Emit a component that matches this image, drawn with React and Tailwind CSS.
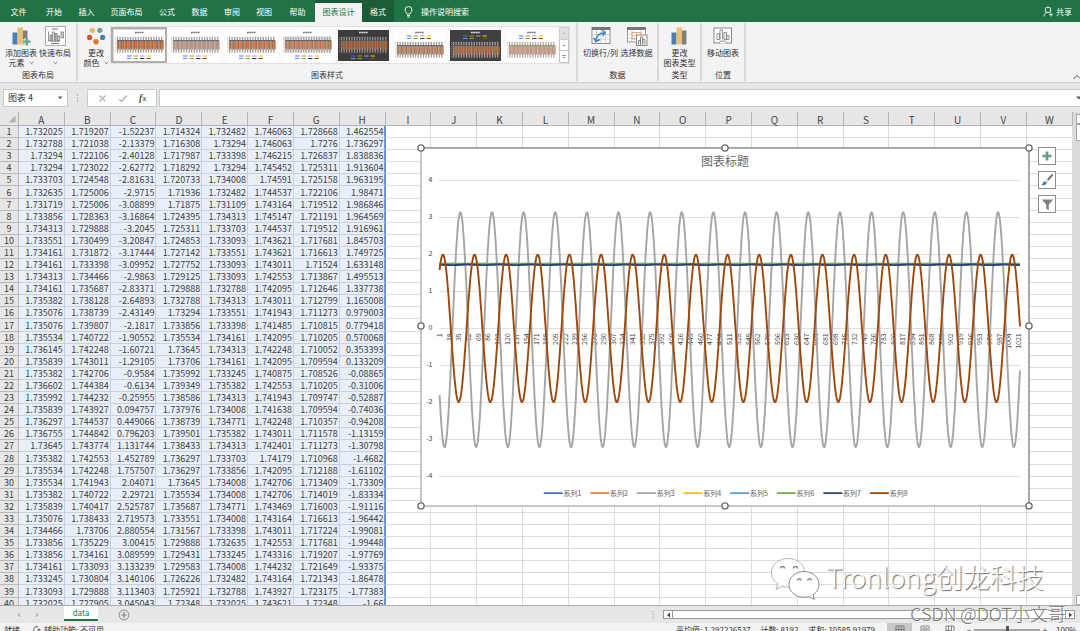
import React from "react";

const FONT = "font-['Noto_Sans_CJK_SC','Liberation_Sans',sans-serif]";

const COLUMNS = "ABCDEFGHIJKLMNOPQRSTUVW".split("");
const EMPTY_COLUMNS = COLUMNS.slice(8);

const ROWS = `1.732025 1.719207 -1.52237 1.714324 1.732482 1.746063 1.728668 1.462554
1.732788 1.721038 -2.13379 1.716308 1.73294 1.746063 1.7276 1.736297
1.73294 1.722106 -2.40128 1.717987 1.733398 1.746215 1.726837 1.838836
1.73294 1.723022 -2.62772 1.718292 1.73294 1.745452 1.725311 1.913604
1.733703 1.724548 -2.81631 1.720733 1.734008 1.74591 1.725158 1.963195
1.732635 1.725006 -2.9715 1.71936 1.732482 1.744537 1.722106 1.98471
1.731719 1.725006 -3.08899 1.71875 1.731109 1.743164 1.719512 1.986846
1.733856 1.728363 -3.16864 1.724395 1.734313 1.745147 1.721191 1.964569
1.734313 1.729888 -3.2045 1.725311 1.733703 1.744537 1.719512 1.916961
1.733551 1.730499 -3.20847 1.724853 1.733093 1.743621 1.717681 1.845703
1.734161 1.731872 -3.17444 1.727142 1.733551 1.743621 1.716613 1.749725
1.734161 1.733398 -3.09952 1.727752 1.733093 1.743011 1.71524 1.633148
1.734313 1.734466 -2.9863 1.729125 1.733093 1.742553 1.713867 1.495513
1.734161 1.735687 -2.83371 1.729888 1.732788 1.742095 1.712646 1.337738
1.735382 1.738128 -2.64893 1.732788 1.734313 1.743011 1.712799 1.165008
1.735076 1.738739 -2.43149 1.73294 1.733551 1.741943 1.711273 0.979003
1.735076 1.739807 -2.1817 1.733856 1.733398 1.741485 1.710815 0.779418
1.735534 1.740722 -1.90552 1.735534 1.734161 1.742095 1.710205 0.570068
1.736145 1.742248 -1.60721 1.73645 1.734313 1.742248 1.710052 0.353393
1.735839 1.743011 -1.29105 1.73706 1.734161 1.742095 1.709594 0.133209
1.735382 1.742706 -0.9584 1.735992 1.733245 1.740875 1.708526 -0.08865
1.736602 1.744384 -0.6134 1.739349 1.735382 1.742553 1.710205 -0.31006
1.735992 1.744232 -0.25955 1.738586 1.734313 1.741943 1.709747 -0.52887
1.735839 1.743927 0.094757 1.737976 1.734008 1.741638 1.709594 -0.74036
1.736297 1.744537 0.449066 1.738739 1.734771 1.742248 1.710357 -0.94208
1.736755 1.744842 0.796203 1.739501 1.735382 1.743011 1.711578 -1.13159
1.73645 1.743774 1.131744 1.738433 1.734313 1.742401 1.711273 -1.30798
1.735382 1.742553 1.452789 1.736297 1.733703 1.74179 1.710968 -1.4682
1.735534 1.742248 1.757507 1.736297 1.733856 1.742095 1.712188 -1.61102
1.735534 1.741943 2.04071 1.73645 1.734008 1.742706 1.713409 -1.73309
1.735382 1.740722 2.29721 1.735534 1.734008 1.742706 1.714019 -1.83334
1.735839 1.740417 2.525787 1.735687 1.734771 1.743469 1.716003 -1.91116
1.735076 1.738433 2.719573 1.733551 1.734008 1.743164 1.716613 -1.96442
1.734466 1.73706 2.880554 1.731567 1.733398 1.743011 1.717224 -1.99081
1.733856 1.735229 3.00415 1.729888 1.732635 1.742553 1.717681 -1.99448
1.733856 1.734161 3.089599 1.729431 1.733245 1.743316 1.719207 -1.97769
1.734161 1.733093 3.133239 1.729583 1.734008 1.744232 1.721649 -1.93375
1.733245 1.730804 3.140106 1.726226 1.732482 1.743164 1.721343 -1.86478
1.733093 1.729888 3.113403 1.725921 1.732788 1.743927 1.723175 -1.77383
1.732025 1.727905 3.045043 1.72348 1.732025 1.743621 1.72348 -1.66`
  .split("\n")
  .map((line) => line.split(" "));

/* ---------- chart ---------- */

const POINTS = 1024;
const px = (i) => 439.3 + (i - 0.5) * (581 / POINTS);
const py = (v) => 328.4 - v * 37;

function linePath(valueAt, step = 1) {
  const parts = [];
  for (let i = 1; i <= POINTS; i += step) {
    parts.push(`${parts.length ? "L" : "M"}${px(i).toFixed(1)} ${py(valueAt(i)).toFixed(1)}`);
  }
  return parts.join("");
}

const wave = (i, shift) => Math.cos((2 * Math.PI * (i - shift)) / 55.75);

const SERIES = [
  { name: "系列1", color: "#4472c4", at: () => 1.735 },
  { name: "系列2", color: "#ed7d31", at: (i) => 1.732 + 0.013 * wave(i, 26) },
  { name: "系列3", color: "#a5a5a5", at: (i) => -3.175 * wave(i, 9.7) - 0.035 },
  { name: "系列4", color: "#ffc000", at: (i) => 1.727 + 0.013 * wave(i, 26) },
  { name: "系列5", color: "#5b9bd5", at: () => 1.734 },
  { name: "系列6", color: "#70ad47", at: () => 1.748 },
  { name: "系列7", color: "#264478", at: (i) => 1.72 - 0.01 * wave(i, 23) },
  { name: "系列8", color: "#9e480e", at: (i) => 1.993 * wave(i, 6.8) },
].map((s) => ({ ...s, d: linePath(s.at) }));

const HANDLES = [
  [421, 148], [725, 148], [1029, 148],
  [421, 326], [1029, 326],
  [421, 506], [725, 506], [1029, 506],
];

function Chart() {
  const ticks = [4, 3, 2, 1, 0, -1, -2, -3, -4];
  const labels = Array.from({ length: 61 }, (_, n) => 1 + n * 17);
  return (
    <svg viewBox="417 144 616 366" width="616" height="366" className={`block ${FONT}`} role="img" aria-label="图表标题">
      <rect x="421" y="148" width="608" height="358" fill="#fff" stroke="#b9b9b9" strokeWidth="1.6" />
      <path d="M421 147.8H1029V506" fill="none" stroke="#8c8c8c" strokeWidth="1" />
      <text x="725" y="166" textAnchor="middle" fontSize="12" fill="#666">图表标题</text>
      {ticks.map((t) => (
        <g key={t}>
          <path d={`M439.3 ${py(t)}H1020.5`} stroke="#dcdcdc" strokeWidth="1" />
          <text x="432.5" y={py(t) + 2} textAnchor="end" fontSize="7" fill="#444">{t}</text>
        </g>
      ))}
      {labels.map((n) => (
        <text key={n} transform={`translate(${px(n) + 2.6} 333.3) rotate(-90)`} textAnchor="end" fontSize="7" fill="#444">{n}</text>
      ))}
      {SERIES.map((s) => (
        <path key={s.name} d={s.d} fill="none" stroke={s.color} strokeWidth="1.9" strokeLinejoin="round" />
      ))}
      {SERIES.map((s, n) => (
        <g key={s.name}>
          <path d={`M${544.5 + n * 46.6} 493.2h17.5`} stroke={s.color} strokeWidth="1.8" strokeLinecap="round" />
          <text x={563.5 + n * 46.6} y="496" fontSize="7" fill="#595959">{s.name}</text>
        </g>
      ))}
      {HANDLES.map(([x, y]) => (
        <circle key={`${x}-${y}`} cx={x} cy={y} r="3.1" fill="#fff" stroke="#6b6b6b" strokeWidth="1.3" />
      ))}
    </svg>
  );
}

/* ---------- ribbon icons ---------- */

function BarsIcon({ plus }) {
  return (
    <svg width="20" height="20" viewBox="0 0 20 20" aria-hidden="true">
      <rect x="1.5" y="6.5" width="5" height="12" fill="#4a7fb5" />
      <rect x="6.5" y="1.5" width="5.5" height="17" fill="#e9c176" />
      <rect x="12" y="4.5" width="4.5" height="14" fill="#7f7f7f" />
      {plus && (
        <path d="M15.8 12v7M12.3 15.5h7" stroke="#f3f3f3" strokeWidth="4.4" />
      )}
      {plus && <path d="M15.8 12v7.4M12.1 15.6h7.4" stroke="#69a58b" strokeWidth="2.4" />}
    </svg>
  );
}

function LayoutIcon() {
  return (
    <svg width="21" height="20" viewBox="0 0 21 20" fill="none" stroke="#777" aria-hidden="true">
      <rect x="0.5" y="0.5" width="20" height="19" fill="#fff" stroke="#aaa" />
      <path d="M7 3h6" />
      <path d="M3.5 5.5v9.5h11.5" strokeWidth="0.8" />
      <rect x="5" y="9" width="2" height="6" fill="#bbb" strokeWidth="0.7" />
      <rect x="7.6" y="6" width="2" height="9" fill="#ddd" strokeWidth="0.7" />
      <rect x="10.2" y="7.5" width="2" height="7.5" fill="#bbb" strokeWidth="0.7" />
      <rect x="12.8" y="10" width="1.6" height="5" fill="#ddd" strokeWidth="0.7" />
      <rect x="16" y="6" width="2.6" height="6" fill="#ccc" strokeWidth="0.7" />
      <path d="M6 17.5h8" />
    </svg>
  );
}

function ColorsIcon() {
  return (
    <svg width="20" height="20" viewBox="0 0 20 20" aria-hidden="true">
      <circle cx="6.3" cy="4.3" r="2.6" fill="#e5b868" />
      <circle cx="13.8" cy="4.3" r="2.6" fill="#69a58b" />
      <circle cx="3.6" cy="11.4" r="2.6" fill="#d6532f" />
      <circle cx="16.6" cy="11.4" r="2.6" fill="#4a7fb5" />
      <circle cx="10" cy="15.8" r="2.7" fill="#e8761c" />
    </svg>
  );
}

function SwitchIcon() {
  return (
    <svg width="20" height="20" viewBox="0 0 20 20" fill="none" aria-hidden="true">
      <rect x="1" y="1.5" width="18" height="16" fill="#fff" stroke="#8a8a8a" />
      <rect x="1" y="1" width="18" height="3" fill="#777" />
      <path d="M5.5 4v13.5M10 4v13.5M14.5 4v13.5M1 8.5h18M1 13h18" stroke="#c4c4c4" strokeWidth="0.8" />
      <path d="M5 15C5 10.5 8 7 13.500 6.800" stroke="#3d80c4" strokeWidth="1.7" />
      <path d="M11 3.800l3.200 3-2.700 3.300M2.600 11.800l2.300 3.700 4-2" stroke="#3d80c4" strokeWidth="1.400" />
    </svg>
  );
}

function SelectDataIcon() {
  return (
    <svg width="22" height="20" viewBox="0 0 22 20" fill="none" aria-hidden="true">
      <rect x="1.500" y="1.500" width="18" height="14.500" fill="#fff" stroke="#999" />
      <rect x="1" y="1" width="19" height="3" fill="#777" />
      <path d="M6 4v12M15 4v12M1.500 12.500h18M1.500 8h4" stroke="#c4c4c4" strokeWidth="0.8" />
      <rect x="6" y="6.500" width="9" height="6.500" stroke="#eba27a" />
      <path d="M6 9.500h9M10.500 6.500v6.500" stroke="#e9b58f" strokeWidth="0.8" />
      <rect x="10.500" y="9" width="10.500" height="10.500" fill="#fff" stroke="#888" />
      <path d="M12.500 18.500v-4h2v4M14.500 18.500v-7.500h2.200v7.500M16.700 18.500v-5h2.200v5" stroke="#777" strokeWidth="0.9" />
    </svg>
  );
}

function MoveIcon() {
  return (
    <svg width="20" height="20" viewBox="0 0 20 20" fill="none" stroke="#777" aria-hidden="true">
      <rect x="1" y="2" width="17.500" height="15" fill="#fff" stroke="#888" />
      <path d="M4 13.500v-6h2.600v6zM7 13.500v-9.500h2.600v9.500M11 13.500v-7h2.400v7zM13.800 13.500v-4h2.200v4z" strokeWidth="0.8" />
      <path d="M6 17.500l1.500-2.500h5l1.500 2.500" fill="#f3f3f3" stroke="#999" />
    </svg>
  );
}

function Chevron() {
  return (
    <svg width="5" height="4" viewBox="0 0 5 4" fill="none" stroke="#555" className="inline-block" aria-hidden="true">
      <path d="M0.800 1l1.700 1.600L4.200 1" strokeWidth="0.8" />
    </svg>
  );
}

/* ---------- ribbon ---------- */

function RibbonButton({ icon, lines, chevron, width }) {
  return (
    <button type="button" className={`flex flex-col items-center whitespace-nowrap text-[8px] leading-[10px] text-[#333] ${width}`}>
      {icon}
      <span className="mt-0.5 block">{lines[0]}</span>
      <span className="flex h-2.5 items-center gap-1">
        {lines[1]}
        {chevron && <Chevron />}
      </span>
    </button>
  );
}

function Group({ label, width, children }) {
  return (
    <section aria-label={label} className={`my-px flex shrink-0 flex-col border-r-2 border-[#d8d8d8] ${width}`}>
      <div className="flex flex-1 justify-center pt-px">{children}</div>
      <div className="pb-px text-center text-[8px] leading-[10px] text-[#333]">{label}</div>
    </section>
  );
}

const THUMBS = [
  { bg: "#ffffff", band: "#b9622c", back: "#9a9a9a", legendTop: false },
  { bg: "#ffffff", band: "#b78f78", back: "#a0a0a0", legendTop: false },
  { bg: "#ffffff", band: "#bd6a38", back: "#9a9a9a", legendTop: false },
  { bg: "#ffffff", band: "#bd6f42", back: "#a5a5a5", plot: "#e4e4e4", legendTop: false },
  { bg: "#3c3c3c", band: "#a8592c", back: "#909090", dark: true, legendTop: false },
  { bg: "#ffffff", band: "#b87850", back: "#9a9a9a", legendTop: true },
  { bg: "#404040", band: "#b06438", back: "#a0a0a0", dark: true, legendTop: true },
  { bg: "#ffffff", band: "#cc9478", back: "#adadad", green: true, legendTop: true },
];

const THUMB_WAVES = Array.from({ length: 18 }, (_, n) => 3.5 + n * 2.6);

function Thumb({ style }) {
  const top = style.legendTop ? 12 : 7;
  const legendY = style.legendTop ? 6 : 26;
  const grid = style.dark ? "#666" : "#e2e2e2";
  return (
    <svg width="51" height="31" viewBox="0 0 51 31" className="block" aria-hidden="true">
      <rect width="51" height="31" fill={style.bg} />
      {style.plot && <rect x="2.500" y="6" width="47" height="17" fill={style.plot} />}
      <path d={`M3 ${top}h46M3 ${top + 4}h46M3 ${top + 8}h46M3 ${top + 12}h46M3 ${top + 16}h46`} stroke={grid} strokeWidth="0.400" />
      <path d="M21 2.500h9" stroke={style.dark ? "#ddd" : "#777"} strokeWidth="1.300" strokeDasharray="1.800 0.400" />
      {THUMB_WAVES.map((x) => (
        <g key={x} fill="none">
          <path d={`M${x} ${top + 15.500}V${top}`} stroke={style.back} strokeWidth="1.300" />
          <path d={`M${x + 1.2} ${top + 12.500}V${top + 3.500}`} stroke={style.band} strokeWidth="1.500" />
          <path d={`M${x} ${top + 11}V${top + 3.500}`} stroke={style.band} strokeWidth="1.200" opacity="0.500" />
        </g>
      ))}
      <path d={`M3 ${top + 3.600}h46`} stroke={style.green ? "#6d9b60" : "#44546a"} strokeWidth="0.800" />
      <path d={`M1.500 ${top}v16`} stroke="#aaa" strokeWidth="0.800" strokeDasharray="0.800 1.200" />
      {["#4472c4", "#ed7d31", "#a5a5a5", "#ffc000"].map((c, n) => (
        <path key={c} d={`M${13 + n * 6.500} ${legendY}h4.500`} stroke={c} strokeWidth="1" />
      ))}
      {["#5b9bd5", "#70ad47", "#264478", "#9e480e"].map((c, n) => (
        <path key={c} d={`M${13 + n * 6.500} ${legendY + 2.500}h4.500`} stroke={c} strokeWidth="1" />
      ))}
    </svg>
  );
}

function Gallery() {
  return (
    <div className="flex h-[38px] border border-[#e2e2e2] bg-[#fbfbfb]">
      {THUMBS.map((t, n) => (
        <button
          key={n}
          type="button"
          aria-label={`样式 ${n + 1}`}
          className={
            n === 0
              ? "flex w-14 items-center justify-center border-2 border-[#b0b0aa] bg-[#d8d8d4]"
              : "flex w-14 items-center justify-center"
          }
        >
          <Thumb style={t} />
        </button>
      ))}
      <div className="flex w-[10px] flex-col text-[#666]">
        {["M3 5l1.500-1.600L6 5z", "M3 4l1.500 1.600L6 4z", "M3 5l1.500 1.600L6 5zM2.500 3h4v0.800h-4z"].map((d, n) => (
          <button
            key={d}
            type="button"
            aria-label={["上一行", "下一行", "其他"][n]}
            className={n === 0 ? "flex flex-1 items-center border border-[#d0d0d0] bg-[#e0e0e0] text-[#aaa]" : "flex flex-1 items-center border border-t-0 border-[#c4c4c4] bg-white"}
          >
            <svg width="8" height="9" viewBox="0 0 9 9"><path d={d} fill="currentColor" /></svg>
          </button>
        ))}
      </div>
    </div>
  );
}

function TabBar() {
  const tab = "flex h-full shrink-0 items-center justify-center pt-px";
  return (
    <header className="flex h-[22px] shrink-0 bg-[#217346] text-[8px] text-white">
      <nav className="flex">
        <button type="button" className={`${tab} w-[37px]`}>文件</button>
        <button type="button" className={`${tab} w-[34px]`}>开始</button>
        <button type="button" className={`${tab} w-[31px]`}>插入</button>
        <button type="button" className={`${tab} w-[49px]`}>页面布局</button>
        <button type="button" className={`${tab} w-8`}>公式</button>
        <button type="button" className={`${tab} w-[33px]`}>数据</button>
        <button type="button" className={`${tab} w-8`}>审阅</button>
        <button type="button" className={`${tab} w-8`}>视图</button>
        <button type="button" className={`${tab} w-[35px]`}>帮助</button>
        <div className="flex bg-[#1a5c38]">
          <div className="flex pt-[3px]">
            <button type="button" aria-current="true" className="w-[47px] bg-[#f3f3f3] pb-0.5 text-center text-[#217346]">图表设计</button>
          </div>
          <button type="button" className={`${tab} w-8`}>格式</button>
        </div>
      </nav>
      <button type="button" className="flex items-center gap-2 pl-2.5 pt-px">
        <svg width="9" height="12" viewBox="0 0 9 12" fill="none" stroke="#fff" strokeWidth="0.900" aria-hidden="true">
          <path d="M2.900 8C2.900 6.500 1 6 1 4a3.500 3.500 0 0 1 7 0c0 2-1.900 2.500-1.900 4zM3 9.600h3M3.300 11h2.400" />
        </svg>
        操作说明搜索
      </button>
      <button type="button" className="ml-auto flex items-center gap-0.5 pr-2 pt-px">
        <svg width="11" height="11" viewBox="0 0 11 11" fill="none" stroke="#fff" strokeWidth="0.900" aria-hidden="true">
          <circle cx="5" cy="3.800" r="2.800" />
          <path d="M1 10.500c0-2.500 1.500-4 3-4M6.500 6.500l1 .8M8 6.800v3.700M6.100 8.700h3.800" />
        </svg>
        共享
      </button>
    </header>
  );
}

function Ribbon() {
  return (
    <div className="flex h-[61px] shrink-0 items-stretch border-b border-[#cfcfcf] bg-[#f3f3f3]">
      <Group label="图表布局" width="w-[78px]">
        <RibbonButton icon={<BarsIcon plus />} lines={["添加图表", "元素"]} chevron width="mt-0.5 w-[34px]" />
        <RibbonButton icon={<LayoutIcon />} lines={["快速布局", ""]} chevron width="mt-0.5 w-[34px]" />
      </Group>
      <Group label="图表样式" width="w-[500px]">
        <div className="flex w-full">
          <RibbonButton icon={<ColorsIcon />} lines={["更改", "颜色"]} chevron width="mt-0.5 w-8 pl-1" />
          <div className="pt-0.5">
            <Gallery />
          </div>
        </div>
      </Group>
      <Group label="数据" width="w-[81px]">
        <RibbonButton icon={<SwitchIcon />} lines={["切换行/列", ""]} width="mt-0.5 w-[38px]" />
        <RibbonButton icon={<SelectDataIcon />} lines={["选择数据", ""]} width="mt-0.5 w-[34px]" />
      </Group>
      <Group label="类型" width="w-[43px]">
        <RibbonButton icon={<BarsIcon />} lines={["更改", "图表类型"]} width="mt-0.5 w-[34px]" />
      </Group>
      <Group label="位置" width="w-11">
        <RibbonButton icon={<MoveIcon />} lines={["移动图表", ""]} width="mt-0.5 w-[34px]" />
      </Group>
      <button type="button" aria-label="折叠功能区" className="ml-auto self-end pb-0.5">
        <svg width="7" height="6" viewBox="0 0 7 6" fill="none" stroke="#555"><path d="M0.500 5L4 1.500 7 4.500" /></svg>
      </button>
    </div>
  );
}

function FormulaBar() {
  const box = "flex h-[18px] items-center border border-[#c9c9c9] bg-white";
  return (
    <div className="flex shrink-0 items-center bg-[#e6e6e6] pb-[5px] pl-[3px] pt-1.5">
      <div className={`${box} w-[65px]`}>
        <input aria-label="名称框" defaultValue="图表 4" className="w-[52px] bg-transparent pl-1 text-[9px] leading-4 text-[#333] outline-none" />
        <button type="button" aria-label="名称列表">
          <svg width="8" height="6" viewBox="0 0 8 6"><path d="M1.800 1.500h4.800L4.200 4.300z" fill="#666" /></svg>
        </button>
      </div>
      <svg width="19" height="10" viewBox="0 0 19 10" aria-hidden="true"><path d="M9.500 1.500v8" stroke="#999" strokeDasharray="1.200 1.700" /></svg>
      <div className={`${box} w-[70px] justify-around px-1`}>
        <button type="button" aria-label="取消">
          <svg width="9" height="9" viewBox="0 0 9 9" stroke="#b5b5b5" strokeWidth="1.200"><path d="M1.500 1.500l6 6M7.500 1.500l-6 6" /></svg>
        </button>
        <button type="button" aria-label="输入">
          <svg width="10" height="9" viewBox="0 0 10 9" fill="none" stroke="#b5b5b5" strokeWidth="1.400"><path d="M1 5l2.500 2.500L9 1.500" /></svg>
        </button>
        <button type="button" className="font-['Liberation_Serif',serif] text-[10px] font-bold italic leading-3 text-[#555]">
          f<span className="text-[8px]">x</span>
        </button>
      </div>
      <div className={`${box} ml-0.5 flex-1 border-r-0`}>
        <input aria-label="编辑栏" className="h-4 w-full bg-transparent px-1 text-[9px] outline-none" />
        <svg width="4" height="6" viewBox="0 0 4 6" className="shrink-0" aria-hidden="true"><path d="M0 1.500h5L3 4.500z" fill="#555" /></svg>
      </div>
    </div>
  );
}

/* ---------- sheet ---------- */

function Sheet() {
  return (
    <table className="w-full table-fixed border-separate border-spacing-0 text-[9px] leading-[11px] text-[#404040]">
      <thead>
        <tr className="bg-[#e6e6e6] text-[10px] leading-[11px] text-[#444]">
          <th className="h-3.5 w-[19px] border-b border-r border-[#b4b4b4] p-0">
            <svg width="8" height="8" viewBox="0 0 8 8" className="ml-auto mr-0.5 block" aria-hidden="true"><path d="M7.500 0.500v7h-7z" fill="#b2b2b2" /></svg>
          </th>
          {COLUMNS.map((c) => (
            <th key={c} scope="col" className="h-3.5 border-b border-r border-[#b4b4b4] p-0 pt-0.5 font-normal">{c}</th>
          ))}
        </tr>
      </thead>
      <tbody>
        {ROWS.map((row, r) => (
          <tr key={r} className="h-3 nth-[11n+6]:h-[13px]">
            <th scope="row" className="border-b border-r border-[#b9b9b9] bg-[#e6e6e6] p-0 text-center font-normal">{r + 1}</th>
            {row.map((v, c) => (
              <td
                key={c}
                className={
                  c === 7
                    ? "border-b border-r-2 border-b-[#c9d1e0] border-r-[#6f94d6] bg-[#e8eff9] p-0 text-right"
                    : "border-b border-r border-[#c9d1e0] bg-[#e8eff9] p-0 pr-px text-right"
                }
              >
                {v}
              </td>
            ))}
            {EMPTY_COLUMNS.map((c) => (
              <td key={c} className="border-b border-r border-[#dcdcdc] bg-white p-0" />
            ))}
          </tr>
        ))}
      </tbody>
    </table>
  );
}

function ChartTools() {
  const cls = "flex size-[18px] items-center justify-center border border-[#8e8e8e] bg-white";
  return (
    <div className="flex flex-col gap-1.5">
      <button type="button" aria-label="图表元素" className={cls}>
        <svg width="12" height="12" viewBox="0 0 12 12"><path d="M6 1.500v9M1.500 6h9" stroke="#5fa386" strokeWidth="2.600" /></svg>
      </button>
      <button type="button" aria-label="图表样式" className={cls}>
        <svg width="14" height="14" viewBox="0 0 14 14">
          <path d="M12.800 1.200c.5.500.3 1.200-.2 1.800L8.500 7.800 7 6.300l4.200-4.600c.5-.6 1.100-.9 1.600-.5z" fill="#6e6e6e" />
          <path d="M6.500 6.800l1.600 1.600-.9 1-1.700-1.700z" fill="#b9cde2" />
          <path d="M5 8.200l1.800 1.800c-.6 2-3 2.600-6 2.200 1.600-.6 1.900-1.500 2.300-2.500.3-.9 1-1.500 1.900-1.500z" fill="#3f7cbb" />
        </svg>
      </button>
      <button type="button" aria-label="图表筛选器" className={cls}>
        <svg width="13" height="13" viewBox="0 0 13 13"><path d="M0.800 1.500h11.400L7.800 6.500v5.700l-2.600-1.500V6.500z" fill="#808080" /></svg>
      </button>
    </div>
  );
}

function Watermark() {
  return (
    <div className="flex items-start gap-1.5">
      <svg width="50" height="44" viewBox="0 0 50 44" fill="#fff" aria-hidden="true">
        <g stroke="#8a8a8a" strokeWidth="1">
          <path d="M18 1.500C8.500 1.500 1.500 7.800 1.500 15.500c0 4.600 2.400 8.500 6.300 11.200L6 32.500l6.200-3.200c2 .6 4 .9 6.200.8 9-.3 16.300-6.300 16.300-14.400S27.400 1.500 18 1.500z" stroke="#b4b4b4" />
          <path d="M34 14.500c-8.500 0-15 5.700-15 12.900S25.500 40.300 34 40.300c1.700 0 3.400-.2 5-.7l5.500 2.800-1.500-4.500c3.700-2.500 6-6.200 6-10.500 0-7.200-6.500-12.900-15-12.900z" />
          <path d="M10.500 11.500a2 2 0 0 1 4 0M23.500 11.500a2 2 0 0 1 4 0M27.500 23.500a1.800 1.800 0 0 1 3.600 0M37.800 23.500a1.800 1.800 0 0 1 3.600 0" fill="none" strokeWidth="1.400" />
        </g>
      </svg>
      <span className="whitespace-nowrap pt-1 text-[27px] font-light leading-8 text-white [text-shadow:1px_1px_1px_#666]">Tronlong创龙科技</span>
    </div>
  );
}

function VerticalScroll() {
  return (
    <div className="flex w-[7px] shrink-0 flex-col overflow-hidden bg-[#dcdcdc] pl-[3px]">
      <div className="mt-0.5 h-2.5 w-3 shrink-0 border border-[#a6a6a6] bg-white" />
      <div className="h-[17px] w-3 shrink-0 border border-[#a6a6a6] bg-white" />
      <div className="mt-auto h-2.5 w-3 shrink-0 border border-[#a6a6a6] bg-white" />
    </div>
  );
}

function SheetTabs() {
  const arrow = "flex h-[9px] w-2.5 items-center justify-center border border-[#999] bg-white";
  return (
    <div className="flex h-[18px] shrink-0 border-t border-[#ababab] bg-[#e6e6e6]">
      <div className="flex w-16 items-center gap-3.5 pl-4 text-[#bbb]">
        <svg width="5" height="6" viewBox="0 0 5 6" aria-hidden="true"><path d="M4 0.500v5L1 3z" fill="currentColor" /></svg>
        <svg width="5" height="6" viewBox="0 0 5 6" aria-hidden="true"><path d="M1 0.500v5L4 3z" fill="currentColor" /></svg>
      </div>
      <button type="button" className="mb-0.5 w-[34px] border-b-2 border-[#217346] bg-white text-[8px] leading-3 text-[#217346]">data</button>
      <button type="button" aria-label="新工作表" className="ml-5 self-center">
        <svg width="12" height="12" viewBox="0 0 12 12" fill="none" stroke="#808080"><circle cx="6" cy="6" r="4.900" strokeWidth="0.900" /><path d="M6 3.200v5.600M3.200 6h5.600" strokeWidth="1.200" /></svg>
      </button>
      <div className="ml-auto flex w-[40%] items-center">
        <svg width="15" height="9" viewBox="0 0 15 9" className="shrink-0" aria-hidden="true"><path d="M5 1v7.500" stroke="#999" strokeDasharray="1.200 1.700" /></svg>
        <button type="button" aria-label="向左滚动" className={arrow}>
          <svg width="5" height="6" viewBox="0 0 5 6"><path d="M4 0.500v5L1 3z" fill="#444" /></svg>
        </button>
        <div className="h-[9px] flex-1 border-y border-[#999] bg-white" />
        <button type="button" aria-label="向右滚动" className={`${arrow} mr-[5px]`}>
          <svg width="5" height="6" viewBox="0 0 5 6"><path d="M1 0.500v5L4 3z" fill="#444" /></svg>
        </button>
      </div>
    </div>
  );
}

function StatusBar() {
  const view = "flex h-3 w-[25px] items-center justify-center";
  return (
    <footer className="flex h-2 shrink-0 items-start overflow-hidden whitespace-nowrap bg-[#f3f3f3] pl-1 text-[8px] leading-[13px] text-[#333]">
      <span>就绪</span>
      <svg width="11" height="12" viewBox="0 0 11 12" fill="none" stroke="#444" strokeWidth="0.900" className="ml-3 mt-0.5" aria-hidden="true">
        <path d="M4 1.500C1.500 2.500 1 6 2.500 9M4 1.500l2 .5M7 4a1 1 0 1 0 .1 0M5 6.500h5M7.500 6.500v3" />
      </svg>
      <span className="ml-px">辅助功能: 不可用</span>
      <div className="ml-auto flex gap-2.5">
        <span>平均值: 1.292226537</span>
        <span>计数: 8192</span>
        <span>求和: 10585.91979</span>
      </div>
      <div className="ml-3 flex">
        <button type="button" aria-label="普通" className={`${view} bg-[#c8c8c8]`}>
          <svg width="10" height="9" viewBox="0 0 10 9" fill="none" stroke="#777"><path d="M1 1h8v7H1zM1 4.500h8M3.700 1v7M6.300 1v7" strokeWidth="0.900" /></svg>
        </button>
        <button type="button" aria-label="页面布局" className={view}>
          <svg width="10" height="9" viewBox="0 0 10 9" fill="none" stroke="#777"><path d="M1 1h8v7H1zM3 3h4v5H3zM3.500 5h3" strokeWidth="0.900" /></svg>
        </button>
        <button type="button" aria-label="分页预览" className={view}>
          <svg width="10" height="9" viewBox="0 0 10 9" fill="none" stroke="#777"><path d="M1 8V1h8v7M3.500 1v4.500h3V1M1 5.500h2.500" strokeWidth="0.900" /></svg>
        </button>
      </div>
      <div className="flex items-center pl-0.5">
        <button type="button" aria-label="缩小" className="w-2.5">−</button>
        <input
          type="range"
          aria-label="缩放"
          defaultValue="50"
          className="h-3 w-[66px] appearance-none bg-[linear-gradient(#a5a5a5,#a5a5a5)] bg-size-[100%_2px] bg-center bg-no-repeat [&::-webkit-slider-thumb]:h-2 [&::-webkit-slider-thumb]:w-[3px] [&::-webkit-slider-thumb]:appearance-none [&::-webkit-slider-thumb]:bg-[#555]"
        />
        <button type="button" aria-label="放大" className="w-2.5">+</button>
        <span className="w-[30px] pl-1.5">100%</span>
      </div>
    </footer>
  );
}

export default function App() {
  return (
    <div className={`relative flex h-screen flex-col overflow-hidden bg-[#e6e6e6] ${FONT}`}>
      <TabBar />
      <Ribbon />
      <FormulaBar />
      <main className="relative flex min-h-0 flex-1 overflow-hidden">
        <div className="min-w-0 flex-1 overflow-hidden">
          <Sheet />
        </div>
        <VerticalScroll />
        <div className="absolute left-[417px] top-8">
          <Chart />
        </div>
        <div className="absolute left-[1038px] top-[35px]">
          <ChartTools />
        </div>
        <div className="absolute bottom-1 right-9">
          <Watermark />
        </div>
      </main>
      <SheetTabs />
      <StatusBar />
      <div className="pointer-events-none absolute bottom-1.5 right-3.5 whitespace-nowrap text-[18px] font-light leading-6 text-[#777] [text-shadow:1px_1px_0_#fff]">
        CSDN @DOT小文哥
      </div>
    </div>
  );
}
